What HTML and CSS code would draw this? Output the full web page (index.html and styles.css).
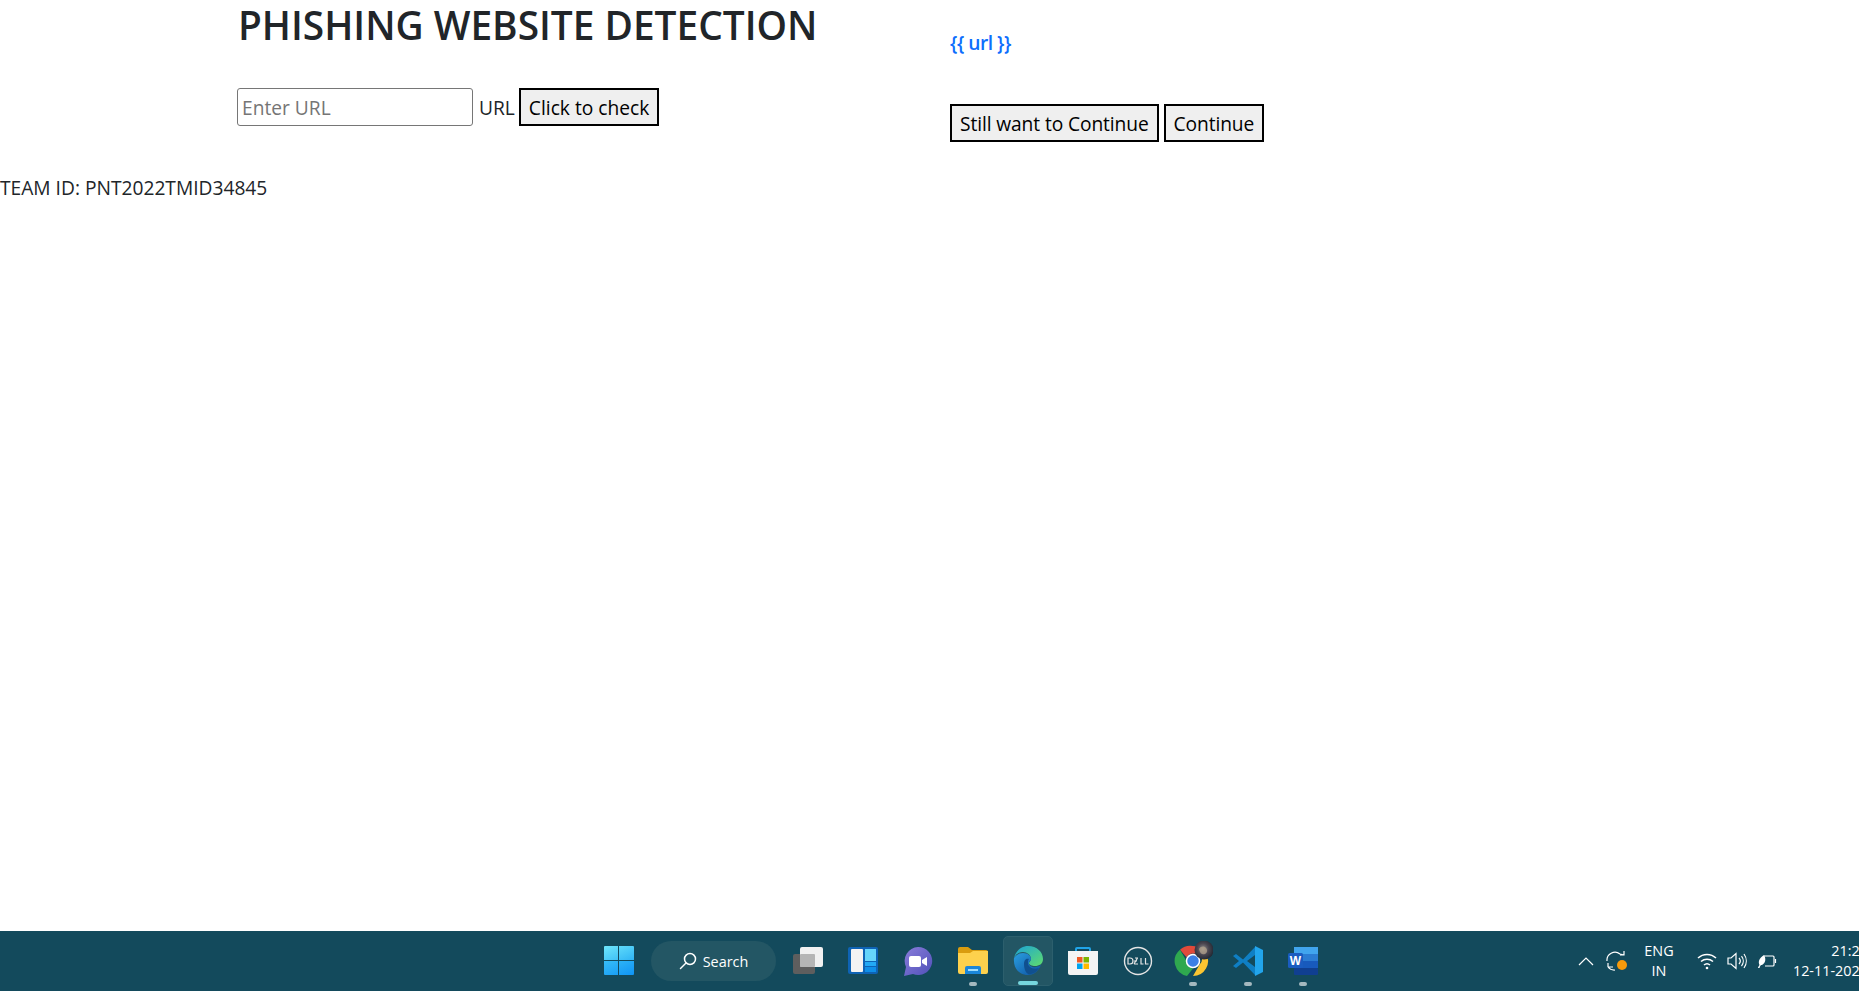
FILE: index.html
```html
<!DOCTYPE html>
<html lang="en">
<head>
    <meta charset="UTF-8">
    <meta name="viewport" content="width=device-width, initial-scale=1.0">
    <title>Phishing Website Detection</title>
    <link rel="stylesheet" href="styles.css">
</head>
<body>
    <main class="page">
        <div class="top-row">
            <section class="check-col">
                <h1>PHISHING WEBSITE DETECTION</h1>
                <form class="check-form">
                    <input type="text" class="url-input" placeholder="Enter URL">
                    <label class="url-label">URL</label>
                    <button type="button" class="btn">Click to check</button>
                </form>
            </section>
            <section class="result-col">
                <a href="#" class="result-link">{{ url }}</a>
                <div class="result-actions">
                    <button type="button" class="btn">Still want to Continue</button>
                    <button type="button" class="btn">Continue</button>
                </div>
            </section>
        </div>
        <p class="team">TEAM ID: PNT2022TMID34845</p>
    </main>

    <footer class="taskbar">
        <div class="task-apps">
            <!-- start -->
            <div class="task-icon">
                <svg width="30" height="30" viewBox="0 0 30 30">
                    <defs>
                        <linearGradient id="winA" x1="0" y1="0" x2="1" y2="1"><stop offset="0" stop-color="#6ee6fb"/><stop offset="1" stop-color="#2fb4f5"/></linearGradient>
                        <linearGradient id="winB" x1="0" y1="0" x2="1" y2="1"><stop offset="0" stop-color="#37bdf7"/><stop offset="1" stop-color="#0f94f5"/></linearGradient>
                    </defs>
                    <path fill="url(#winA)" d="M1 0h13v14H0V1a1 1 0 0 1 1-1zM15 0h14a1 1 0 0 1 1 1v13H15z"/>
                    <path fill="url(#winB)" d="M0 15h14v14H1a1 1 0 0 1-1-1zM15 15h15v13a1 1 0 0 1-1 1H15z"/>
                </svg>
            </div>
            <div class="search-pill">
                <svg width="18" height="18" viewBox="0 0 18 18" fill="none" stroke="#fff" stroke-width="1.5"><circle cx="11" cy="7" r="5.5"/><path d="M7 11l-5.5 5.5" stroke-linecap="round"/></svg>
                <span>Search</span>
            </div>
            <!-- task view -->
            <div class="task-icon">
                <svg width="30" height="30" viewBox="0 0 30 30">
                    <rect x="0" y="8" width="22" height="20" rx="2" fill="#5e5e5e"/>
                    <rect x="7" y="1" width="23" height="20" rx="2" fill="#f1f1f1"/>
                    <rect x="7" y="8" width="15" height="13" rx="1" fill="#b5b5b5"/>
                </svg>
            </div>
            <!-- widgets -->
            <div class="task-icon">
                <svg width="30" height="30" viewBox="0 0 30 30">
                    <rect x="0" y="1" width="30" height="27" rx="2" fill="#0e63b5"/>
                    <rect x="3" y="3" width="12" height="23" rx="1" fill="#f3f3f3"/>
                    <rect x="17" y="3" width="11" height="12" fill="#66d5fb"/>
                    <rect x="17" y="16" width="11" height="4" fill="#22a9f5"/>
                    <rect x="17" y="21" width="11" height="5" fill="#0f8fe8"/>
                </svg>
            </div>
            <!-- chat -->
            <div class="task-icon">
                <svg width="30" height="30" viewBox="0 0 30 30">
                    <defs><linearGradient id="chat" x1="0" y1="0" x2="1" y2="1"><stop offset="0" stop-color="#8a7ddb"/><stop offset="1" stop-color="#4f50b8"/></linearGradient></defs>
                    <path fill="url(#chat)" d="M15 1a14 14 0 1 1-5 27l-9 2 2-9A14 14 0 0 1 15 1z"/>
                    <rect x="6" y="10" width="12" height="11" rx="2" fill="#fff"/>
                    <path fill="#fff" d="M19 14l5-3v9l-5-3z"/>
                </svg>
            </div>
            <!-- explorer -->
            <div class="task-icon has-dot">
                <svg width="30" height="30" viewBox="0 0 30 30">
                    <path fill="#d99c0f" d="M0 3a2 2 0 0 1 2-2h8l4 3h14a2 2 0 0 1 2 2v6H0z"/>
                    <path fill="#fdd14d" d="M0 7h12l3-2h15v21a2 2 0 0 1-2 2H2a2 2 0 0 1-2-2z"/>
                    <path fill="#1a86d9" d="M7 22a2 2 0 0 1 2-2h12a2 2 0 0 1 2 2v6H7z"/>
                    <rect x="10" y="23" width="10" height="2" fill="#9fdcfb"/>
                </svg>
            </div>
            <!-- edge -->
            <div class="task-icon is-active">
                <svg width="30" height="30" viewBox="0 0 30 30">
                    <defs>
                        <linearGradient id="edgeA" x1="0" y1="0" x2="1" y2="1"><stop offset="0" stop-color="#1ba3d9"/><stop offset="1" stop-color="#5fdc6c"/></linearGradient>
                        <linearGradient id="edgeB" x1="0" y1="0" x2="1" y2="1"><stop offset="0" stop-color="#2a9fe0"/><stop offset="1" stop-color="#0c4f9e"/></linearGradient>
                    </defs>
                    <path fill="url(#edgeA)" d="M1 12C3 4 9 0 15 0c9 0 15 6 15 13 0 5-4 7-8 7-3 0-6-1-6-3 0-1 2-2 2-4 0-4-4-7-8-7-4 0-7 2-9 6z"/>
                    <path fill="url(#edgeB)" d="M1 12c3-4 6-5 9-5 5 0 8 3 8 6 0 2-3 3-2 5 1 4 8 4 12 1-3 7-8 10-13 10C6 29 0 22 1 12z"/>
                    <path fill="#10508f" d="M11 18c0-5 3-6 5-5-1 1-1 2-1 4 0 4 5 7 11 5-3 5-8 7-11 6-3-2-4-6-4-10z"/>
                </svg>
                <i class="active-bar"></i>
            </div>
            <!-- store -->
            <div class="task-icon">
                <svg width="30" height="30" viewBox="0 0 30 30">
                    <path fill="none" stroke="#20a4e8" stroke-width="2" d="M8 8V3a1 1 0 0 1 1-1h12a1 1 0 0 1 1 1v5"/>
                    <path fill="#f4f4f4" d="M0 5h30v22a2 2 0 0 1-2 2H2a2 2 0 0 1-2-2z"/>
                    <rect x="9" y="11" width="5.5" height="5.5" fill="#ef5a24"/>
                    <rect x="15.5" y="11" width="5.5" height="5.5" fill="#7cb500"/>
                    <rect x="9" y="17.5" width="5.5" height="5.5" fill="#00a4ef"/>
                    <rect x="15.5" y="17.5" width="5.5" height="5.5" fill="#ffb900"/>
                </svg>
            </div>
            <!-- dell -->
            <div class="task-icon">
                <svg width="30" height="30" viewBox="0 0 30 30" fill="none" stroke="#e4e4e4">
                    <circle cx="15" cy="15" r="13.500" stroke-width="1.400"/>
                    <path stroke-width="1.200" d="M5 12h2a3 3 0 0 1 0 6H5zM11 18l3.500-6M12 12h3M11 15h3M11 18h4M18 12v6h2.500M22.500 12v6h3"/>
                </svg>
            </div>
            <!-- chrome -->
            <div class="task-icon has-dot">
                <svg width="40" height="40" viewBox="0 0 40 40">
                    <defs>
                        <radialGradient id="avatar" cx="0.45" cy="0.45" r="0.6"><stop offset="0" stop-color="#8f8c8a"/><stop offset="0.5" stop-color="#4a4650"/><stop offset="1" stop-color="#1e2530"/></radialGradient>
                    </defs>
                    <path fill="#e04a3a" d="M20 5a15 15 0 0 1 13 7.500H20a7.500 7.500 0 0 0-6.500 3.800L7 8.800A15 15 0 0 1 20 5z"/>
                    <path fill="#2fa84f" d="M7 8.800l6.500 11.200a7.500 7.500 0 0 0 6.500 7.500l-6 7.500A15 15 0 0 1 7 8.800z"/>
                    <path fill="#fbc531" d="M33 12.500a15 15 0 0 1-13 22.500l6.500-11.200a7.500 7.500 0 0 0 0-11.300z"/>
                    <circle cx="20" cy="20" r="6.500" fill="#3b7fe6" stroke="#fff" stroke-width="1.500"/>
                    <circle cx="31" cy="9" r="9.500" fill="url(#avatar)"/>
                    <path fill="#b9a68e" opacity="0.7" d="M26 8c2-3 5-3 7-1s1 5-1 6-5 0-6-5z"/>
                </svg>
            </div>
            <!-- vs code -->
            <div class="task-icon has-dot">
                <svg width="30" height="30" viewBox="0 0 30 30">
                    <path fill="#0f7fc4" d="M0 10l3-2 7 5.500L22 1v8l-8 6 8 6v8L10 16.500 3 22l-3-2 6-5z"/>
                    <path fill="#22a5ec" d="M22 0l8 4v22l-8 4z"/>
                </svg>
            </div>
            <!-- word -->
            <div class="task-icon has-dot">
                <svg width="30" height="30" viewBox="0 0 30 30">
                    <rect x="6" y="1" width="24" height="7" fill="#41a5ee"/>
                    <rect x="6" y="8" width="24" height="7" fill="#2b7cd3"/>
                    <rect x="6" y="15" width="24" height="7" fill="#185abd"/>
                    <rect x="6" y="22" width="24" height="7" rx="1" fill="#103f91"/>
                    <rect x="0" y="7" width="15" height="15" rx="1.500" fill="#1a5cc0"/>
                    <text x="7.500" y="18.500" class="word-letter">W</text>
                </svg>
            </div>
        </div>

        <div class="tray">
            <svg width="16" height="10" viewBox="0 0 16 10" fill="none" stroke="#fff" stroke-width="1.200"><path d="M1 9l7-7 7 7"/></svg>
            <svg class="tray-sync" width="22" height="22" viewBox="0 0 22 22" fill="none" stroke="#fff" stroke-width="1.200">
                <path d="M1 11a8 8 0 0 1 13-7l4 1M18 1v4h-4M2 17h5M2 17v-4M2 17a8 8 0 0 0 7 3"/>
                <circle cx="16" cy="15" r="5" fill="#f79a0b" stroke="none"/>
            </svg>
            <div class="tray-lang"><span>ENG</span><span>IN</span></div>
            <svg class="tray-wifi" width="20" height="18" viewBox="0 0 20 18" fill="none" stroke="#fff" stroke-width="1.500">
                <path d="M1 6a13 13 0 0 1 18 0M4 9.500a9 9 0 0 1 12 0M7 13a4.500 4.500 0 0 1 6 0"/>
                <circle cx="10" cy="16" r="1.300" fill="#fff" stroke="none"/>
            </svg>
            <svg class="tray-volume" width="20" height="18" viewBox="0 0 20 18" fill="none" stroke="#fff" stroke-width="1.200">
                <path d="M1 6h3L9 1.500v15L4 12H1z"/>
                <path d="M12 6a4.500 4.500 0 0 1 0 6M14.500 4a8 8 0 0 1 0 10M17 2a12 12 0 0 1 0 14"/>
            </svg>
            <svg width="20" height="16" viewBox="0 0 20 16" fill="none" stroke="#fff" stroke-width="1.200">
                <path d="M7 3h9a1 1 0 0 1 1 1v8a1 1 0 0 1-1 1H8"/>
                <path d="M18.500 6v4"/>
                <path fill="#fff" stroke="none" d="M1 15c0-1 1-2 1.500-3C1 9 2 5 7 2c2 3 2 8-2 10-1 0-2 .500-2.500 3z"/>
            </svg>
            <div class="tray-clock"><span>21:26</span><span>12-11-2022</span></div>
        </div>
    </footer>
</body>
</html>
```

FILE: styles.css
```css
* {
    box-sizing: border-box;
}

html,
body {
    height: 100%;
}

body {
    margin: 0;
    display: flex;
    flex-direction: column;
    overflow: hidden;
    background-color: #fff;
    color: #212529;
    font-family: "Open Sans", "Noto Sans", sans-serif;
    font-size: 19.2px;
}

.page {
    flex: 1;
}

.top-row {
    display: flex;
}

.check-col {
    width: 950px;
    padding-left: 237px;
}

h1 {
    margin: 0;
    padding-left: 1px;
    font-size: 38.8px;
    line-height: 50px;
    font-weight: 600;
}

.check-form {
    display: flex;
    align-items: center;
    margin-top: 38px;
}

.check-form .btn {
    letter-spacing: 0;
}

.url-input {
    width: 236px;
    height: 38px;
    padding: 1px 4px;
    border: 1px solid #767676;
    border-radius: 3px;
    font: inherit;
}

.url-input::placeholder {
    color: #757575;
}

.url-label {
    margin: 0 4px 0 6px;
}

.btn {
    height: 38px;
    padding: 0 8px;
    border: 2px solid #000;
    background-color: #efefef;
    color: #000;
    font: inherit;
    letter-spacing: -0.1px;
    cursor: pointer;
}

.result-col {
    padding-top: 30px;
}

.result-link {
    display: block;
    height: 26px;
    color: #0d6efd;
    font-weight: 600;
    letter-spacing: -0.5px;
    text-decoration: none;
    line-height: 26px;
}

.result-actions {
    display: flex;
    gap: 5px;
    margin-top: 48px;
}

.team {
    margin: 33px 0 0;
    line-height: 26px;
}

/* windows taskbar */
.taskbar {
    display: flex;
    flex-shrink: 0;
    justify-content: space-between;
    height: 60px;
    background-color: #134a5c;
    color: #fff;
    font-size: 14.4px;
}

.task-apps {
    display: flex;
    align-items: center;
    gap: 5px;
    padding-left: 594px;
}

.task-icon {
    position: relative;
    display: flex;
    align-items: center;
    justify-content: center;
    width: 50px;
    height: 50px;
    border-radius: 5px;
}

.search-pill {
    display: flex;
    align-items: center;
    justify-content: center;
    gap: 6px;
    width: 125px;
    height: 40px;
    margin: 0 2px;
    border-radius: 20px;
    background-color: #235664;
}

.has-dot::after {
    content: "";
    position: absolute;
    left: 21px;
    bottom: 0;
    width: 8px;
    height: 4px;
    border-radius: 2px;
    background-color: #a4b8bf;
}

.is-active {
    background-color: #235664;
    border: 1px solid #2c5f6d;
}

.active-bar {
    position: absolute;
    left: 14px;
    bottom: 0;
    width: 20px;
    height: 4px;
    border-radius: 2px;
    background-color: #76d6de;
}

.word-letter {
    fill: #fff;
    font-family: "Liberation Sans", sans-serif;
    font-size: 12px;
    font-weight: 700;
    text-anchor: middle;
}

.tray {
    display: flex;
    align-items: center;
    width: 281px;
    flex-shrink: 0;
    overflow: hidden;
    white-space: nowrap;
}

.tray svg {
    flex-shrink: 0;
}

.tray-sync {
    margin-left: 12px;
}

.tray-lang {
    display: flex;
    flex-direction: column;
    align-items: center;
    flex-shrink: 0;
    width: 30px;
    margin: 0 23px 0 16px;
    line-height: 20px;
}

.tray-wifi,
.tray-volume {
    margin-right: 10px;
}

.tray-clock {
    display: flex;
    flex-direction: column;
    align-items: flex-end;
    flex-shrink: 0;
    width: 78px;
    margin-left: 13px;
    line-height: 20px;
}
```
